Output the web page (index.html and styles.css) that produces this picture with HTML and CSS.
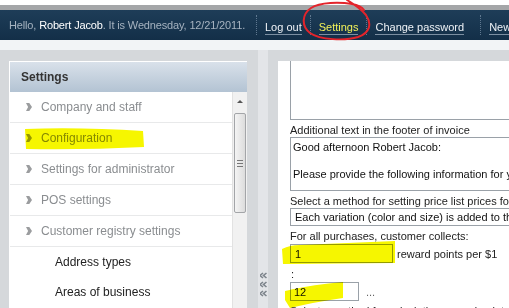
FILE: index.html
```html
<!doctype html>
<html lang="en">
<head>
	<meta charset="UTF-8">
	<title>Settings - Configuration</title>
	<link rel="stylesheet" href="styles.css">
</head>
<body>
	<div class="top-edge"></div>
	<div class="navbar">
		<div class="greet">Hello, <b>Robert Jacob</b>. It is Wednesday, 12/21/2011.</div>
		<ul class="nav-links">
			<li><a href="#">Log out</a></li>
			<li class="active"><a href="#">Settings</a></li>
			<li><a href="#">Change password</a></li>
			<li class="last"><a href="#">New user</a></li>
		</ul>
	</div>
	<div class="subbar"></div>

	<div class="main">
		<div class="side">
			<div class="side-head">Settings</div>
			<div class="side-body">
				<ul class="menu">
					<li class="item"><i class="chev"></i>Company and staff</li>
					<li class="item"><i class="chev"></i>Configuration</li>
					<li class="item"><i class="chev"></i>Settings for administrator</li>
					<li class="item"><i class="chev"></i>POS settings</li>
					<li class="item"><i class="chev"></i>Customer registry settings</li>
					<li class="sub">Address types</li>
					<li class="sub">Areas of business</li>
				</ul>
				<div class="scrollbar">
					<div class="sb-up"></div>
					<div class="sb-thumb"><span></span></div>
				</div>
			</div>
		</div>

		<div class="splitter">
			<svg width="7" height="26" viewBox="0 0 7 26">
				<path d="M3 1 L0 3.5 L3 6 M6.5 1 L3.5 3.5 L6.5 6" />
				<path d="M3 10 L0 12.5 L3 15 M6.5 10 L3.5 12.5 L6.5 15" />
				<path d="M3 19 L0 21.5 L3 24 M6.5 19 L3.5 21.5 L6.5 24" />
			</svg>
		</div>

		<div class="content">
			<div class="form">
				<textarea class="field ta-top" readonly></textarea>
				<label class="lbl">Additional text in the footer of invoice</label>
				<textarea class="field ta-footer" readonly>Good afternoon Robert Jacob:

Please provide the following information for your order</textarea>
				<label class="lbl">Select a method for setting price list prices for variations</label>
				<select class="field sel">
					<option>Each variation (color and size) is added to the price list separately</option>
				</select>
				<label class="lbl">For all purchases, customer collects:</label>
				<div class="inline">
					<input class="field num" type="text" value="1">
					<span>reward points per $1</span>
				</div>
				<div class="colon">:</div>
				<div class="inline">
					<input class="field num short" type="text" value="12">
					<span class="dots">...</span>
				</div>
				<label class="lbl">Select a method for calculating reward points on purchases</label>
			</div>
		</div>
	</div>

	<!-- annotations drawn on top of the screenshot -->
	<svg class="marks" width="509" height="308" viewBox="0 0 509 308">
		<g class="hl">
			<path d="M25 129 Q80 127 143 131 L144 147 Q85 150 26 149 Z" />
			<path d="M282 249 Q290 245 300 245 L395 241 L395 263 L283 264 Z" />
			<path d="M285 291 Q310 285 343 282 L343 298 Q315 302 290 308 L285 300 Z" />
		</g>
		<path class="circle" d="M347 0 C352 3, 360 8, 366 15 C372 24, 370 33, 358 37 C345 41, 320 40, 310 33 C301 26, 302 14, 311 8 C320 2, 340 2, 352 4 C358 5, 362 7, 364 10" />
	</svg>
</body>
</html>
```

FILE: styles.css
```css
html, body {
	margin: 0;
	padding: 0;
}
body {
	position: relative;
	width: 509px;
	height: 308px;
	overflow: hidden;
	font-family: "Liberation Sans", Arial, sans-serif;
	font-size: 11px;
	background: #fff;
}

/* top bar */
.top-edge {
	height: 5px;
	border-top: 5px solid #fff;
	background: #a4a6a8;
}
.navbar {
	height: 30px;
	display: flex;
	align-items: center;
	padding-left: 9px;
	background: linear-gradient(#1e3d58, #132f48);
	color: #a6b3c0;
	white-space: nowrap;
}
.greet {
	flex: none;
	width: 247px;
	letter-spacing: -0.15px;
}
.greet b {
	font-weight: normal;
	color: #fff;
}
.nav-links {
	display: flex;
	list-style: none;
	margin: 0;
	padding: 0;
}
.nav-links li {
	height: 20px;
	display: flex;
	align-items: center;
	padding: 0 8px;
	border-left: 1px dotted #5f7890;
}
.nav-links li.last {
	margin-left: 8px;
}
.nav-links a {
	color: #eef2f6;
	text-decoration: none;
	line-height: 13px;
	margin-top: 6px;
	border-bottom: 1px solid #7c8fa2;
}
.nav-links li.active a {
	color: #f2f25a;
}

.subbar {
	height: 10px;
	background: #f2f4f6;
}

/* main area */
.main {
	display: flex;
	height: 247px;
	padding: 11px 0 0 9px;
	background: #d5d8db;
}

.side {
	flex: none;
	width: 237px;
	border-left: 1px solid #fff;
	border-top: 1px solid #fff;
	background: #fff;
}
.side-head {
	height: 30px;
	line-height: 30px;
	padding-left: 11px;
	font-size: 12px;
	font-weight: bold;
	color: #333;
	background: linear-gradient(#d9e1ea, #b3c3d3);
}
.side-body {
	display: flex;
}
.menu {
	flex: 1;
	list-style: none;
	margin: 0;
	padding: 0;
	font-size: 12px;
}
.menu .item {
	height: 30px;
	display: flex;
	align-items: center;
	padding-left: 16px;
	border-bottom: 1px solid #e8e9ea;
	color: #8a8d90;
}
.menu .sub {
	height: 30px;
	line-height: 30px;
	padding-left: 45px;
	color: #222;
}
.chev {
	width: 6px;
	height: 8px;
	margin-right: 9px;
	background: #9b9d9f;
	clip-path: polygon(0 0, 55% 0, 100% 50%, 55% 100%, 0 100%, 35% 50%);
}

.scrollbar {
	flex: none;
	width: 14px;
	height: 216px;
	border-left: 1px solid #e2e2e2;
	background: #f1f1f1;
}
.sb-up {
	height: 20px;
	position: relative;
}
.sb-up::after {
	content: "";
	position: absolute;
	left: 4px;
	top: 8px;
	border: 3px solid transparent;
	border-bottom: 3px solid #555;
	border-top: 0;
}
.sb-thumb {
	height: 98px;
	margin: 1px 1px 0 1px;
	border: 1px solid #a3a5a8;
	border-radius: 2px;
	background: linear-gradient(90deg, #f4f4f4, #dcdcdc);
	display: flex;
	align-items: center;
	justify-content: center;
}
.sb-thumb span {
	width: 6px;
	height: 5px;
	border-top: 1px solid #777;
	border-bottom: 1px solid #777;
	position: relative;
}
.sb-thumb span::after {
	content: "";
	position: absolute;
	left: 0;
	right: 0;
	top: 2px;
	border-top: 1px solid #777;
}

.splitter {
	flex: none;
	width: 10px;
	margin-left: 11px;
	margin-top: -11px;
	background: #e3e5e8;
	display: flex;
	justify-content: center;
	padding-top: 222px;
	box-sizing: border-box;
}
.splitter path {
	fill: none;
	stroke: #7d848b;
	stroke-width: 1.6;
}

.content {
	flex: 1;
	margin-left: 10px;
	background: #fff;
	overflow: hidden;
}
.form {
	padding-left: 12px;
	color: #222;
	white-space: nowrap;
}
.field {
	display: block;
	box-sizing: border-box;
	margin: 0;
	font: 11px "Liberation Sans", Arial, sans-serif;
	color: #111;
	border: 1px solid #9aa1a8;
	background: #fff;
	border-radius: 0;
	outline: none;
}
textarea.field {
	width: 300px;
	resize: none;
	overflow: hidden;
	padding: 3px 2px;
	line-height: 13.5px;
}
.ta-top {
	height: 80px;
	margin-top: -21px;
}
.ta-footer {
	height: 54px;
}
.lbl {
	display: block;
	margin-top: 3px;
	line-height: 14px;
}
.sel {
	width: 300px;
	height: 18px;
	padding: 0 4px;
	-webkit-appearance: none;
	appearance: none;
}
.inline {
	display: flex;
	align-items: center;
	margin-top: 1px;
}
.num {
	width: 103px;
	height: 19px;
	padding: 0 4px;
}
.num.short {
	width: 69px;
	padding: 0 3px;
}
.inline span {
	margin-left: 4px;
}
.inline .dots {
	margin-left: 7px;
	color: #666;
}
.colon {
	margin-top: 4px;
	line-height: 14px;
	padding-left: 1px;
}

/* annotations */
.marks {
	position: absolute;
	top: 0;
	left: 0;
	pointer-events: none;
}
.hl path {
	fill: #f6f600;
	mix-blend-mode: multiply;
}
.circle {
	fill: none;
	stroke: #e3242b;
	stroke-width: 2;
	stroke-linecap: round;
}
```
